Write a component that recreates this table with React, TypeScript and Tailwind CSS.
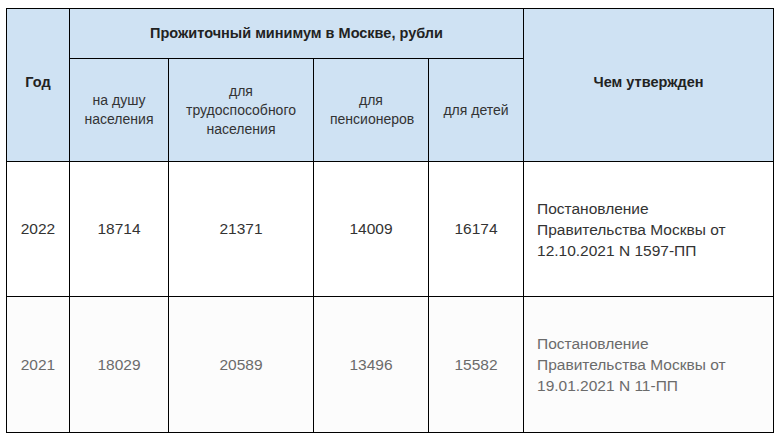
import React from "react";

const cell = "border border-black";

export default function App() {
  return (
    <div className="w-[781px] h-[442px] bg-white pt-[8px] pl-[6px]" style={{ fontFamily: '"Liberation Sans", Arial, sans-serif' }}>
      <table className="border-collapse table-fixed w-[767px] text-[#333]">
        <colgroup>
          <col className="w-[63px]" />
          <col className="w-[99px]" />
          <col className="w-[145px]" />
          <col className="w-[115px]" />
          <col className="w-[95px]" />
          <col className="w-[250px]" />
        </colgroup>
        <thead className="bg-[#cfe2f3]">
          <tr className="h-[50px]">
            <th rowSpan={2} className={`${cell} text-[14.5px] font-bold text-[#222] pb-[4px]`}>Год</th>
            <th colSpan={4} className={`${cell} text-[14.5px] font-bold text-[#222]`}>
              Прожиточный минимум в Москве, рубли
            </th>
            <th rowSpan={2} className={`${cell} text-[14.5px] font-bold text-[#222] pb-[4px]`}>Чем утвержден</th>
          </tr>
          <tr className="h-[103px]">
            <th className={`${cell} font-normal text-[14px] leading-[19px] px-2`}>на душу населения</th>
            <th className={`${cell} font-normal text-[14px] leading-[19px] px-2`}>для трудоспособного населения</th>
            <th className={`${cell} font-normal text-[14px] leading-[19px] px-4`}>для пенсионеров</th>
            <th className={`${cell} font-normal text-[14px] leading-[19px] px-2`}>для детей</th>
          </tr>
        </thead>
        <tbody>
          <tr className="h-[135px] text-[15.5px] text-[#333]">
            <td className={`${cell} text-center`}>2022</td>
            <td className={`${cell} text-center`}>18714</td>
            <td className={`${cell} text-center`}>21371</td>
            <td className={`${cell} text-center`}>14009</td>
            <td className={`${cell} text-center`}>16174</td>
            <td className={`${cell} pl-[13px] pr-2 leading-[21px]`}>
              Постановление
              <br />
              Правительства Москвы от
              <br />
              12.10.2021 N 1597-ПП
            </td>
          </tr>
          <tr className="h-[136px] text-[15.5px] text-[#6b6b6b] bg-[#fcfcfc]">
            <td className={`${cell} text-center`}>2021</td>
            <td className={`${cell} text-center`}>18029</td>
            <td className={`${cell} text-center`}>20589</td>
            <td className={`${cell} text-center`}>13496</td>
            <td className={`${cell} text-center`}>15582</td>
            <td className={`${cell} pl-[13px] pr-2 leading-[21px]`}>
              Постановление
              <br />
              Правительства Москвы от
              <br />
              19.01.2021 N 11-ПП
            </td>
          </tr>
        </tbody>
      </table>
    </div>
  );
}
